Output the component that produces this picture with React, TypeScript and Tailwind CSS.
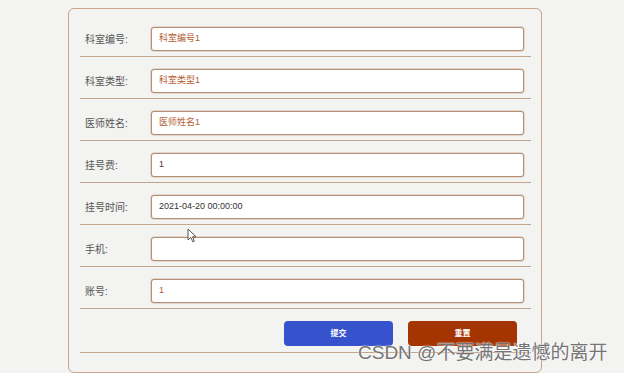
import React from "react";

const font = { fontFamily: '"Liberation Sans", "Noto Sans CJK SC", sans-serif' };

const rows: { label: string; value: string; color: string }[] = [
  { label: "科室编号:", value: "科室编号1", color: "text-[#b25c30]" },
  { label: "科室类型:", value: "科室类型1", color: "text-[#b25c30]" },
  { label: "医师姓名:", value: "医师姓名1", color: "text-[#b25c30]" },
  { label: "挂号费:", value: "1", color: "text-[#4a3a30]" },
  { label: "挂号时间:", value: "2021-04-20 00:00:00", color: "text-[#333333]" },
  { label: "手机:", value: "", color: "text-[#333333]" },
  { label: "账号:", value: "1", color: "text-[#b25c30]" },
];

export default function App() {
  return (
    <div className="w-[624px] h-[376px] bg-white relative overflow-hidden" style={font}>
      <div className="h-[373px] bg-[#f3f3f1] pt-[8px] pl-[68px]">
        <div className="w-[474px] h-[365px] border border-[#c9a38b] rounded-[6px] pt-[6px] pl-[11px] pr-[10px]">
          {rows.map((r) => (
            <div key={r.label} className="h-[42px] flex items-start pt-[12px] border-b border-[#c4a48e]">
              <div className="w-[71px] h-[24px] pl-[5px] flex items-center text-[10px] text-[#555555]">
                {r.label}
              </div>
              <div
                className={`w-[373px] h-[24px] bg-white border border-[#b38f76] rounded-[3px] px-[7px] flex items-center text-[9px] shadow-[0_0_0_0.5px_#d4bcaa] ${r.color}`}
              >
                {r.value}
              </div>
            </div>
          ))}
          <div className="h-[44px] flex justify-end items-start gap-[15px] pt-[12px] pr-[14px] border-b border-[#c4a48e]">
            <button className="w-[109px] h-[25px] rounded-[4px] bg-[#3652cc] text-white text-[8px] font-bold flex items-center justify-center">
              提交
            </button>
            <button className="w-[109px] h-[25px] rounded-[4px] bg-[#a53500] text-white text-[8px] font-bold flex items-center justify-center">
              重置
            </button>
          </div>
        </div>
      </div>
      <div
        className="absolute left-[358px] top-[343px] text-[19px] text-[#747474] leading-none whitespace-nowrap"
        style={{ textShadow: "0 0 2px #ffffff, 0 0 1px #ffffff" }}
      >
        CSDN @不要满是遗憾的离开
      </div>
      <svg className="absolute left-[187px] top-[228px]" width="10" height="15" viewBox="0 0 10 15">
        <path d="M1 1 L1 12 L3.8 9.4 L5.8 13.8 L7.4 13.1 L5.5 8.8 L9 8.8 Z" fill="#ffffff" stroke="#555555" strokeWidth="1" strokeLinejoin="round" />
      </svg>
    </div>
  );
}
